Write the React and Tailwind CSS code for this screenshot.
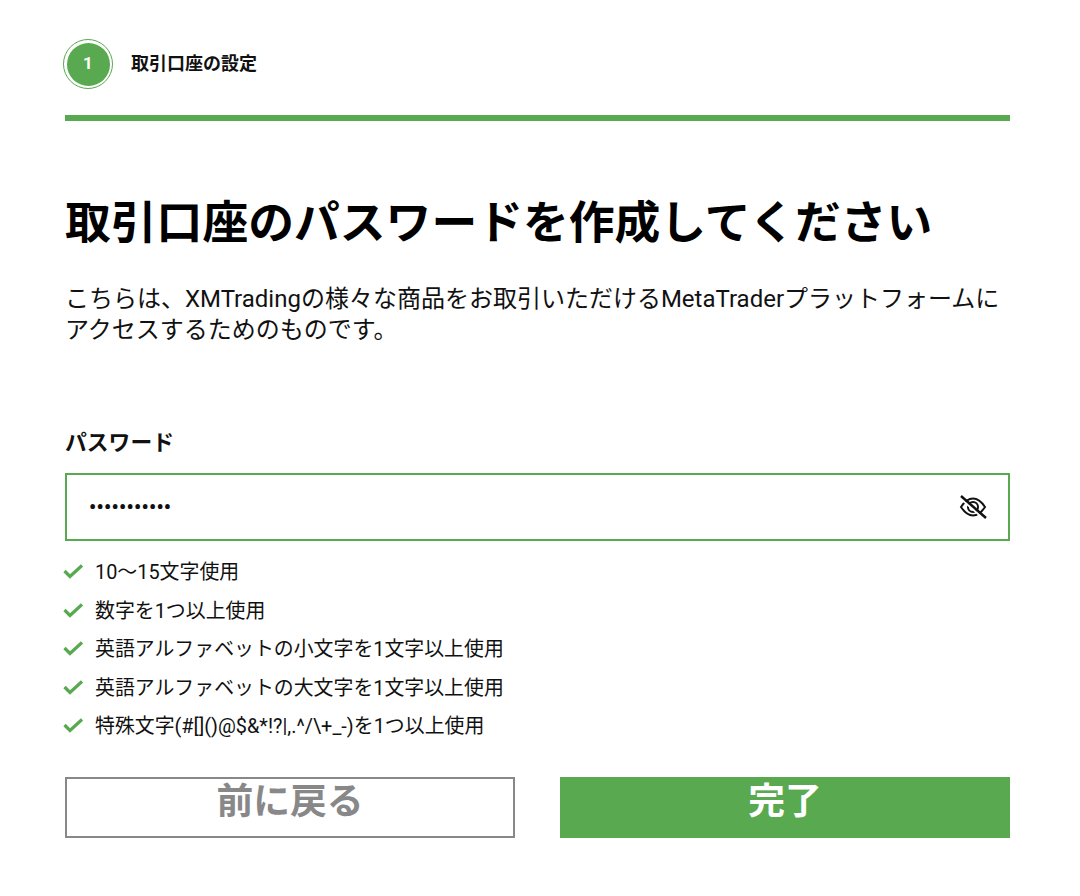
const rules = [
  "10〜15文字使用",
  "数字を1つ以上使用",
  "英語アルファベットの小文字を1文字以上使用",
  "英語アルファベットの大文字を1文字以上使用",
  "特殊文字(#[]()@$&*!?|,.^/\\+_-)を1つ以上使用",
];

function Check() {
  return (
    <svg width="20" height="16" viewBox="0 0 20 16" fill="none" className="shrink-0 -mt-[3px]">
      <path d="M1.500 8 L7 13.500 L19 2.500" stroke="#58a94f" strokeWidth="3.200" />
    </svg>
  );
}

function EyeOff() {
  return (
    <svg width="28" height="26" viewBox="0 0 28 26" fill="none" stroke="#111" strokeWidth="2">
      <path d="M2 13 C6 7 10 4.500 14 4.500 C18 4.500 22 7 26 13 C22 19 18 21.500 14 21.500 C10 21.500 6 19 2 13 Z" />
      <circle cx="14" cy="13" r="5" />
      <path d="M1 4 L26 26" stroke="#fff" strokeWidth="2" />
      <path d="M2 2 L27 24" strokeWidth="2.500" />
    </svg>
  );
}

export default function App() {
  return (
    <div className="w-[1080px] h-[896px] bg-white pl-[65px] pr-[70px] text-[#111] font-['Roboto','Noto_Sans_CJK_JP',sans-serif] overflow-hidden">
      <div className="flex items-center h-[115px] pt-[13px] -ml-[2px]">
        <div className="w-[50px] h-[50px] rounded-full border border-[#58a94f] flex items-center justify-center">
          <div className="w-[43px] h-[43px] rounded-full bg-[#58a94f] text-white font-bold text-[17px] flex items-center justify-center">1</div>
        </div>
        <div className="ml-[18px] text-[18px] font-bold leading-none">取引口座の設定</div>
      </div>
      <div className="h-[6px] bg-[#58a94f]" />
      <h1 className="mt-[77px] text-[45.800px] leading-[52px] font-bold text-black whitespace-nowrap">取引口座のパスワードを作成してください</h1>
      <p className="mt-[34px] text-[24px] leading-[31px] text-[#111] whitespace-nowrap">
        こちらは、XMTradingの様々な商品をお取引いただけるMetaTraderプラットフォームに<br />アクセスするためのものです。
      </p>
      <div className="mt-[83px] text-[21.800px] leading-[28px] font-bold">パスワード</div>
      <div className="mt-[16px] h-[68px] border-2 border-[#58a94f] flex items-center justify-between pl-[22px] pr-[21px]">
        <span className="text-[20px] font-bold tracking-[0.3px] leading-none">•••••••••••</span>
        <EyeOff />
      </div>
      <ul className="mt-[18px] flex flex-col gap-[11.500px] -ml-[2px]">
        {rules.map((rule) => (
          <li key={rule} className="flex items-center gap-[12px] h-[27px] text-[19.900px] leading-[27px]">
            <Check />
            <span className="whitespace-nowrap">{rule}</span>
          </li>
        ))}
      </ul>
      <div className="mt-[37px] flex justify-between">
        <button className="w-[450px] h-[61px] border-2 border-[#888888] text-[#888888] text-[36.800px] font-bold leading-none pb-[10px]">前に戻る</button>
        <button className="w-[450px] h-[61px] bg-[#58a94f] text-white text-[36.800px] font-bold leading-none pb-[10px]">完了</button>
      </div>
    </div>
  );
}
